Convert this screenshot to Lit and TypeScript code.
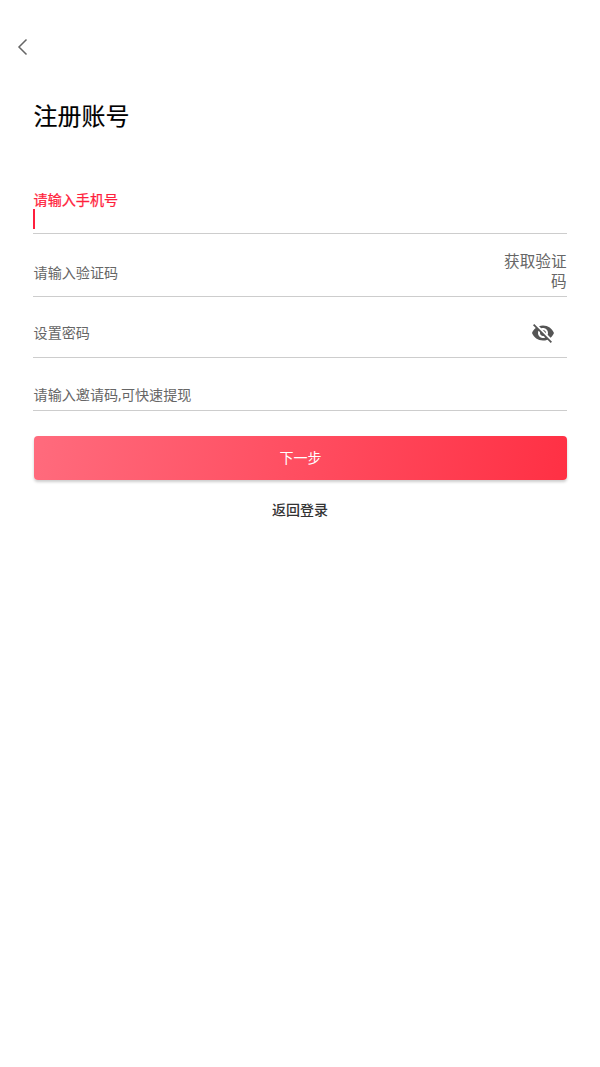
import { LitElement, html, css } from "lit";
import { customElement } from "lit/decorators.js";

@customElement("app-root")
export class AppRoot extends LitElement {
  static styles = css`
    :host {
      display: block;
      width: 600px;
      height: 1067px;
      background: #fff;
      font-family: "Roboto", "Noto Sans CJK SC", sans-serif;
      overflow: hidden;
    }
    .top {
      height: 93px;
      display: flex;
      align-items: flex-start;
      padding: 37px 0 0 13px;
      box-sizing: border-box;
    }
    .back { display: block; width: 20px; height: 20px; }
    .content { padding: 0 33px; display: flex; flex-direction: column; }
    h1 {
      margin: 0;
      height: 48px;
      line-height: 48px;
      font-size: 24px;
      font-weight: 400;
      color: #000;
      padding-left: 0.5px;
      -webkit-text-stroke: 0.15px #000;
    }
    .form { margin-top: 40px; display: flex; flex-direction: column; }
    .field {
      border-bottom: 1px solid #cdcdcd;
      display: flex;
      box-sizing: border-box;
      font-size: 14.1px;
      color: #666;
      padding-left: 0.6px;
    }
    .phone { height: 53px; flex-direction: column; padding-top: 9px; }
    .phone .label { color: #ff1f3d; line-height: 20px; font-weight: 400; -webkit-text-stroke: 0.25px #ff1f3d; }
    .caret { width: 2px; height: 20px; margin: -1px 0 0 -0.6px; background: #ff1f3d; }
    .code { height: 63px; align-items: center; justify-content: space-between; padding-top: 14px; }
    .code .send {
      width: 63px;
      font-size: 15.6px;
      line-height: 20px;
      text-align: right;
      color: #666;
      margin-right: 0.5px;
    }
    .pwd { height: 61px; align-items: center; justify-content: space-between; padding-top: 14px; }
    .pwd span { position: relative; top: -2px; }
    .eye { width: 24px; height: 24px; margin: -2px 12px 0 0; display: block; }
    .invite { height: 53px; align-items: center; padding-top: 20px; }
    button {
      margin: 25px 0 0 1px;
      height: 44px;
      border: 0;
      border-radius: 4px;
      background: linear-gradient(100deg, #ff6b7d 0%, #ff3044 100%);
      color: #fff;
      font: inherit;
      font-size: 14px;
      box-shadow: 0 2px 3px rgba(0, 0, 0, 0.2);
      padding: 0 0 2px;
    }
    .login {
      margin-top: 20px;
      text-align: center;
      font-size: 14px;
      line-height: 20px;
      font-weight: 500;
      color: #333;
    }
  `;

  render() {
    return html`
      <div class="top">
        <svg class="back" viewBox="0 0 20 20" fill="none" stroke="#666" stroke-width="1.5">
          <path d="M13.5 2.5 L6 10 L13.5 17.5" />
        </svg>
      </div>
      <div class="content">
        <h1>注册账号</h1>
        <div class="form">
          <div class="field phone">
            <div class="label">请输入手机号</div>
            <div class="caret"></div>
          </div>
          <div class="field code">
            <span>请输入验证码</span>
            <span class="send">获取验证码</span>
          </div>
          <div class="field pwd">
            <span>设置密码</span>
            <svg class="eye" viewBox="0 0 24 24" fill="#555">
              <path d="M12 7c2.76 0 5 2.24 5 5 0 .65-.13 1.26-.36 1.83l2.92 2.92c1.51-1.26 2.7-2.89 3.43-4.75-1.73-4.39-6-7.5-11-7.5-1.4 0-2.74.25-3.98.7l2.16 2.16C10.74 7.13 11.35 7 12 7zM2 4.27l2.28 2.28.46.46C3.08 8.3 1.78 10.02 1 12c1.73 4.39 6 7.5 11 7.5 1.55 0 3.03-.3 4.38-.84l.42.42L19.73 22 21 20.73 3.27 3 2 4.27zM7.53 9.8l1.55 1.55c-.05.21-.08.43-.08.65 0 1.66 1.34 3 3 3 .22 0 .44-.03.65-.08l1.55 1.55c-.67.33-1.41.53-2.2.53-2.76 0-5-2.24-5-5 0-.79.2-1.53.53-2.2zm4.31-.78l3.15 3.15.02-.16c0-1.66-1.34-3-3-3l-.17.01z" />
            </svg>
          </div>
          <div class="field invite"><span>请输入邀请码,可快速提现</span></div>
          <button>下一步</button>
          <div class="login">返回登录</div>
        </div>
      </div>
    `;
  }
}
